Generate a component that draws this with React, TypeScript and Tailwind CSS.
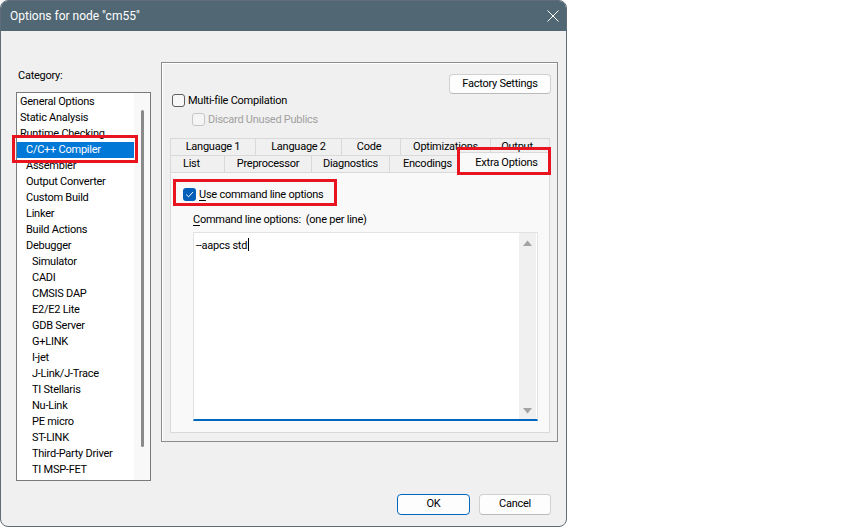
import type { ReactNode } from "react";

type Category = { label: string; indent: string; selected?: boolean };

const categories: Category[] = [
    { label: "General Options", indent: "pl-[3px]" },
    { label: "Static Analysis", indent: "pl-[3px]" },
    { label: "Runtime Checking", indent: "pl-[3px]" },
    { label: "C/C++ Compiler", indent: "pl-[9px]", selected: true },
    { label: "Assembler", indent: "pl-[9px]" },
    { label: "Output Converter", indent: "pl-[9px]" },
    { label: "Custom Build", indent: "pl-[9px]" },
    { label: "Linker", indent: "pl-[9px]" },
    { label: "Build Actions", indent: "pl-[9px]" },
    { label: "Debugger", indent: "pl-[9px]" },
    { label: "Simulator", indent: "pl-[15px]" },
    { label: "CADI", indent: "pl-[15px]" },
    { label: "CMSIS DAP", indent: "pl-[15px]" },
    { label: "E2/E2 Lite", indent: "pl-[15px]" },
    { label: "GDB Server", indent: "pl-[15px]" },
    { label: "G+LINK", indent: "pl-[15px]" },
    { label: "I-jet", indent: "pl-[15px]" },
    { label: "J-Link/J-Trace", indent: "pl-[15px]" },
    { label: "TI Stellaris", indent: "pl-[15px]" },
    { label: "Nu-Link", indent: "pl-[15px]" },
    { label: "PE micro", indent: "pl-[15px]" },
    { label: "ST-LINK", indent: "pl-[15px]" },
    { label: "Third-Party Driver", indent: "pl-[15px]" },
    { label: "TI MSP-FET", indent: "pl-[15px]" },
];

const backTabs = [
    { label: "Language 1", cls: "w-[85px] justify-center" },
    { label: "Language 2", cls: "w-[86px] justify-center" },
    { label: "Code", cls: "w-[59px] justify-center pr-[4px]" },
    { label: "Optimizations", cls: "w-[90px] justify-center" },
    { label: "Output", cls: "w-[60px] justify-center pr-[6px] border-r" },
];

const frontTabs = [
    { label: "List", cls: "w-[54px] justify-start pl-[12px]" },
    { label: "Preprocessor", cls: "w-[87px] justify-center" },
    { label: "Diagnostics", cls: "w-[78px] justify-center" },
    { label: "Encodings", cls: "w-[70px] justify-center pl-[6px]" },
];

// red annotation frame drawn over the dialog
const Marker = ({ className }: { className: string }) => (
    <div className={`pointer-events-none absolute z-20 border-[3px] border-[#e8141f] ${className}`} />
);

const CheckBox = ({ checked, disabled }: { checked?: boolean; disabled?: boolean }) => {
    if (checked) {
        return (
            <div className="flex h-[13px] w-[13px] shrink-0 items-center justify-center rounded-[3px] bg-[#005fb8]">
                <svg width="9" height="9" viewBox="0 0 9 9" fill="none">
                    <path d="M1.5 4.8 L3.6 6.8 L7.6 2.4" stroke="white" strokeWidth="1" strokeLinecap="round" strokeLinejoin="round" />
                </svg>
            </div>
        );
    }
    return (
        <div
            className={`h-[13px] w-[13px] shrink-0 rounded-[3px] border ${
                disabled ? "border-[#c6c6c6] bg-[#f5f5f5]" : "border-[#5f5f5f] bg-[#f7f7f7]"
            }`}
        />
    );
};

const Button = ({ children, primary, className = "" }: { children: ReactNode; primary?: boolean; className?: string }) => (
    <div
        className={`flex items-center justify-center rounded-[4px] border bg-[#fdfdfd] text-black ${
            primary ? "border-[#0067c0]" : "border-[#d0d0d0] border-b-[#bababa]"
        } ${className}`}
    >
        {children}
    </div>
);

const Triangle = ({ up }: { up?: boolean }) => (
    <svg width="9" height="6" viewBox="0 0 9 6">
        <path d={up ? "M0 6 L4.5 0.5 L9 6 Z" : "M0 0 L4.5 5.5 L9 0 Z"} fill="#a3a3a3" />
    </svg>
);

export default function App() {
    return (
        <div className="h-[528px] w-[850px] bg-white font-['Roboto',sans-serif] text-[11px] tracking-[-0.25px] text-black">
            <div className="flex h-[527px] w-[567px] flex-col overflow-hidden rounded-[8px] border border-[#5e6d77] bg-[#f0f0f0]">
                {/* Title bar */}
                <div className="flex h-[30px] shrink-0 items-center justify-between bg-[#516773] pl-[9px] pr-[7px] text-[12px] tracking-normal text-white">
                    <span>Options for node "cm55"</span>
                    <svg width="12" height="12" viewBox="0 0 12 12">
                        <path d="M0.5 0.5 L11.5 11.5 M11.5 0.5 L0.5 11.5" stroke="white" strokeWidth="1" />
                    </svg>
                </div>

                <div className="flex flex-1 flex-col">
                    <div className="flex gap-[10px] pl-[15px] pt-[31px]">
                        {/* Category tree */}
                        <div className="flex w-[135px] flex-col">
                            <div className="mt-[6px] pl-[2px] leading-[16px]">Category:</div>
                            <div className="relative mt-[8px] flex h-[389px] border border-[#7a7a7a] bg-white">
                                <div className="flex-1 pt-[0.5px]">
                                    {categories.map((c) => (
                                        <div
                                            key={c.label}
                                            className={`h-[16px] whitespace-nowrap leading-[16px] ${c.indent} ${
                                                c.selected ? "bg-[#0078d7] text-white" : ""
                                            }`}
                                        >
                                            {c.label}
                                        </div>
                                    ))}
                                </div>
                                <div className="flex w-[16px] justify-center bg-[#f8f8f8] pt-[17px]">
                                    <div className="h-[337px] w-[3px] rounded-full bg-[#8a8a8a]" />
                                </div>
                                <Marker className="-left-[5px] top-[42px] h-[28px] w-[126px]" />
                            </div>
                        </div>

                        {/* Compiler settings group */}
                        <div className="flex h-[380px] w-[397px] flex-col border border-[#8c8c8c] pt-[11px] shadow-[inset_1px_1px_0_#ffffff]">
                            <div className="flex justify-end pr-[6px]">
                                <Button className="h-[20px] w-[102px]">Factory Settings</Button>
                            </div>
                            <div className="flex h-[13px] items-center gap-[3px] pl-[10px]">
                                <CheckBox />
                                <span className="leading-[13px]">Multi-file Compilation</span>
                            </div>
                            <div className="mt-[6px] flex h-[13px] items-center gap-[3px] pl-[30px]">
                                <CheckBox disabled />
                                <span className="leading-[13px] text-[#a0a0a0]">Discard Unused Publics</span>
                            </div>

                            {/* Tab strip, two rows */}
                            <div className="relative ml-[8px] mt-[12px] w-[380px]">
                                <div className="flex h-[17px]">
                                    {backTabs.map((t) => (
                                        <div
                                            key={t.label}
                                            className={`flex items-center border-l border-t border-[#d9d9d9] bg-[#f0f0f0] ${t.cls}`}
                                        >
                                            {t.label}
                                        </div>
                                    ))}
                                </div>
                                <div className="flex h-[17px] items-end">
                                    {frontTabs.map((t) => (
                                        <div
                                            key={t.label}
                                            className={`flex h-[17px] items-center border-l border-t border-[#d9d9d9] bg-[#f0f0f0] ${t.cls}`}
                                        >
                                            {t.label}
                                        </div>
                                    ))}
                                    <div className="relative z-10 -mb-px flex h-[21px] w-[91px] items-center justify-center border-l border-r border-t border-[#d9d9d9] bg-[#f9f9f9] pl-[4px]">
                                        Extra Options
                                    </div>
                                </div>
                                <Marker className="left-[287px] top-[9px] h-[28px] w-[94px]" />
                            </div>

                            {/* Extra Options page */}
                            <div className="relative ml-[8px] flex h-[261px] w-[380px] flex-col border border-[#d9d9d9] bg-[#f9f9f9] pl-[12px] pt-[15px]">
                                <div className="flex h-[13px] items-center gap-[3px]">
                                    <CheckBox checked />
                                    <span className="leading-[13px]">
                                        <span className="underline underline-offset-2">U</span>se command line options
                                    </span>
                                </div>
                                <Marker className="left-[2px] top-[6px] h-[27px] w-[164px]" />
                                <div className="ml-[10px] mt-[11px] leading-[16px]">
                                    <span className="underline underline-offset-2">C</span>ommand line options:&nbsp; (one per line)
                                </div>
                                <div className="ml-[10px] mt-[4px] flex h-[189px] w-[345px] border border-b-2 border-[#e3e3e3] border-b-[#0067c0] bg-white">
                                    <div className="flex-1 pl-[2px] pt-[3px] leading-[16px]">
                                        --aapcs std<span className="ml-px inline-block h-[13px] w-px translate-y-[2px] bg-black" />
                                    </div>
                                    <div className="mr-px flex w-[17px] flex-col items-center justify-between bg-[#f0f0f0] pb-[5px] pt-[7px]">
                                        <Triangle up />
                                        <Triangle />
                                    </div>
                                </div>
                            </div>
                        </div>
                    </div>

                    <div className="mt-[13px] flex justify-end gap-[9px] pr-[15px]">
                        <Button primary className="h-[21px] w-[73px]">
                            OK
                        </Button>
                        <Button className="h-[21px] w-[72px]">Cancel</Button>
                    </div>
                </div>
            </div>
        </div>
    );
}
